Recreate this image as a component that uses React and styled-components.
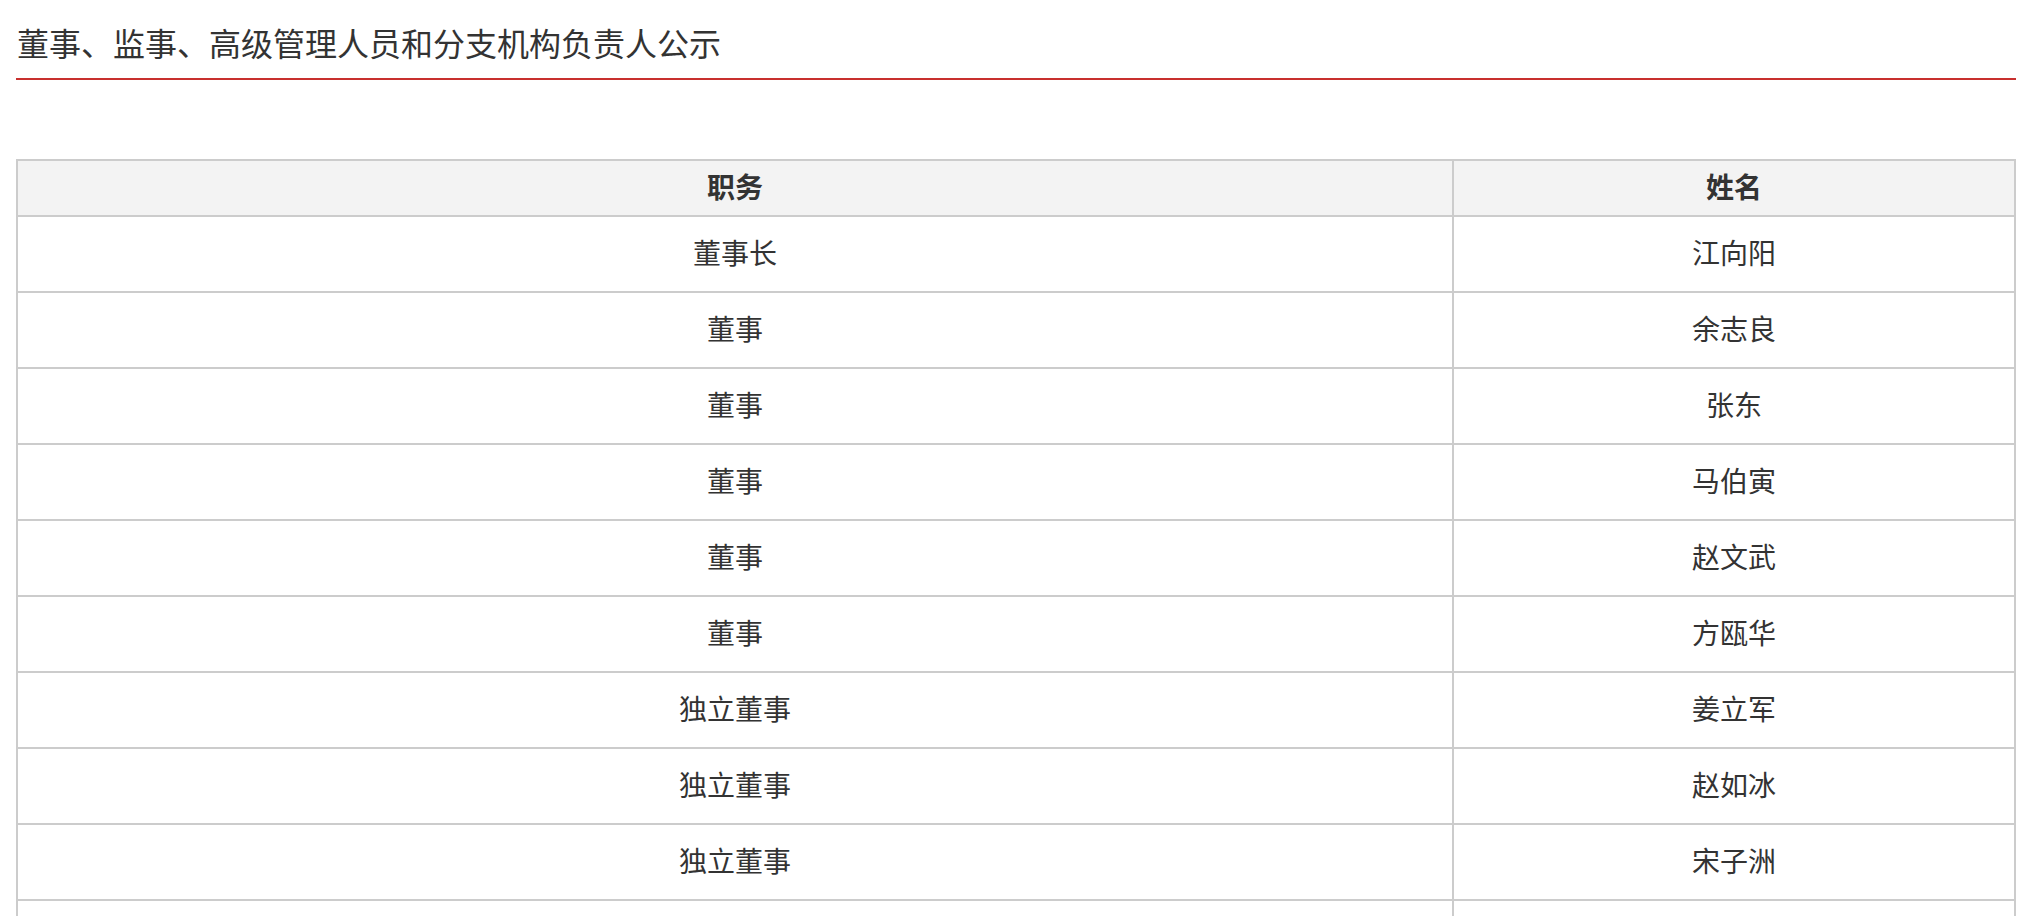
import React from "react";
import styled, { createGlobalStyle } from "styled-components";

const Global = createGlobalStyle`
  html, body { margin: 0; padding: 0; background: #fff; overflow: hidden; }
  body { font-family: "Noto Sans CJK SC", "Noto Sans", sans-serif; color: #333; }
`;

const Page = styled.div`
  padding: 0 12px 0 16px;
`;

const Title = styled.h1`
  margin: 20px 0 0;
  padding: 0 0 14px 1px;
  font-size: 32px;
  line-height: 44px;
  font-weight: 400;
  color: #333;
  border-bottom: 2px solid #c8302e;
`;

const Table = styled.table`
  margin-top: 79px;
  width: 100%;
  border-collapse: collapse;
  table-layout: fixed;
`;

const HeadCell = styled.th`
  border: 2px solid #cccccc;
  background: #f3f3f3;
  font-size: 28px;
  font-weight: 700;
  color: #333;
  line-height: 38px;
  padding: 6px 0 10px;
  text-align: center;
`;

const Cell = styled.td`
  border: 2px solid #cccccc;
  font-size: 28px;
  font-weight: 400;
  color: #333;
  line-height: 38px;
  padding: 16px 0 20px;
  text-align: center;
`;

const rows = [
  ["董事长", "江向阳"],
  ["董事", "余志良"],
  ["董事", "张东"],
  ["董事", "马伯寅"],
  ["董事", "赵文武"],
  ["董事", "方瓯华"],
  ["独立董事", "姜立军"],
  ["独立董事", "赵如冰"],
  ["独立董事", "宋子洲"],
  ["", ""],
];

export default function App() {
  return (
    <>
      <Global />
      <Page>
        <Title>董事、监事、高级管理人员和分支机构负责人公示</Title>
        <Table>
          <colgroup>
            <col style={{ width: "1436px" }} />
            <col />
          </colgroup>
          <thead>
            <tr>
              <HeadCell>职务</HeadCell>
              <HeadCell>姓名</HeadCell>
            </tr>
          </thead>
          <tbody>
            {rows.map(([role, name], i) => (
              <tr key={i}>
                <Cell>{role || "\u00a0"}</Cell>
                <Cell>{name || "\u00a0"}</Cell>
              </tr>
            ))}
          </tbody>
        </Table>
      </Page>
    </>
  );
}
